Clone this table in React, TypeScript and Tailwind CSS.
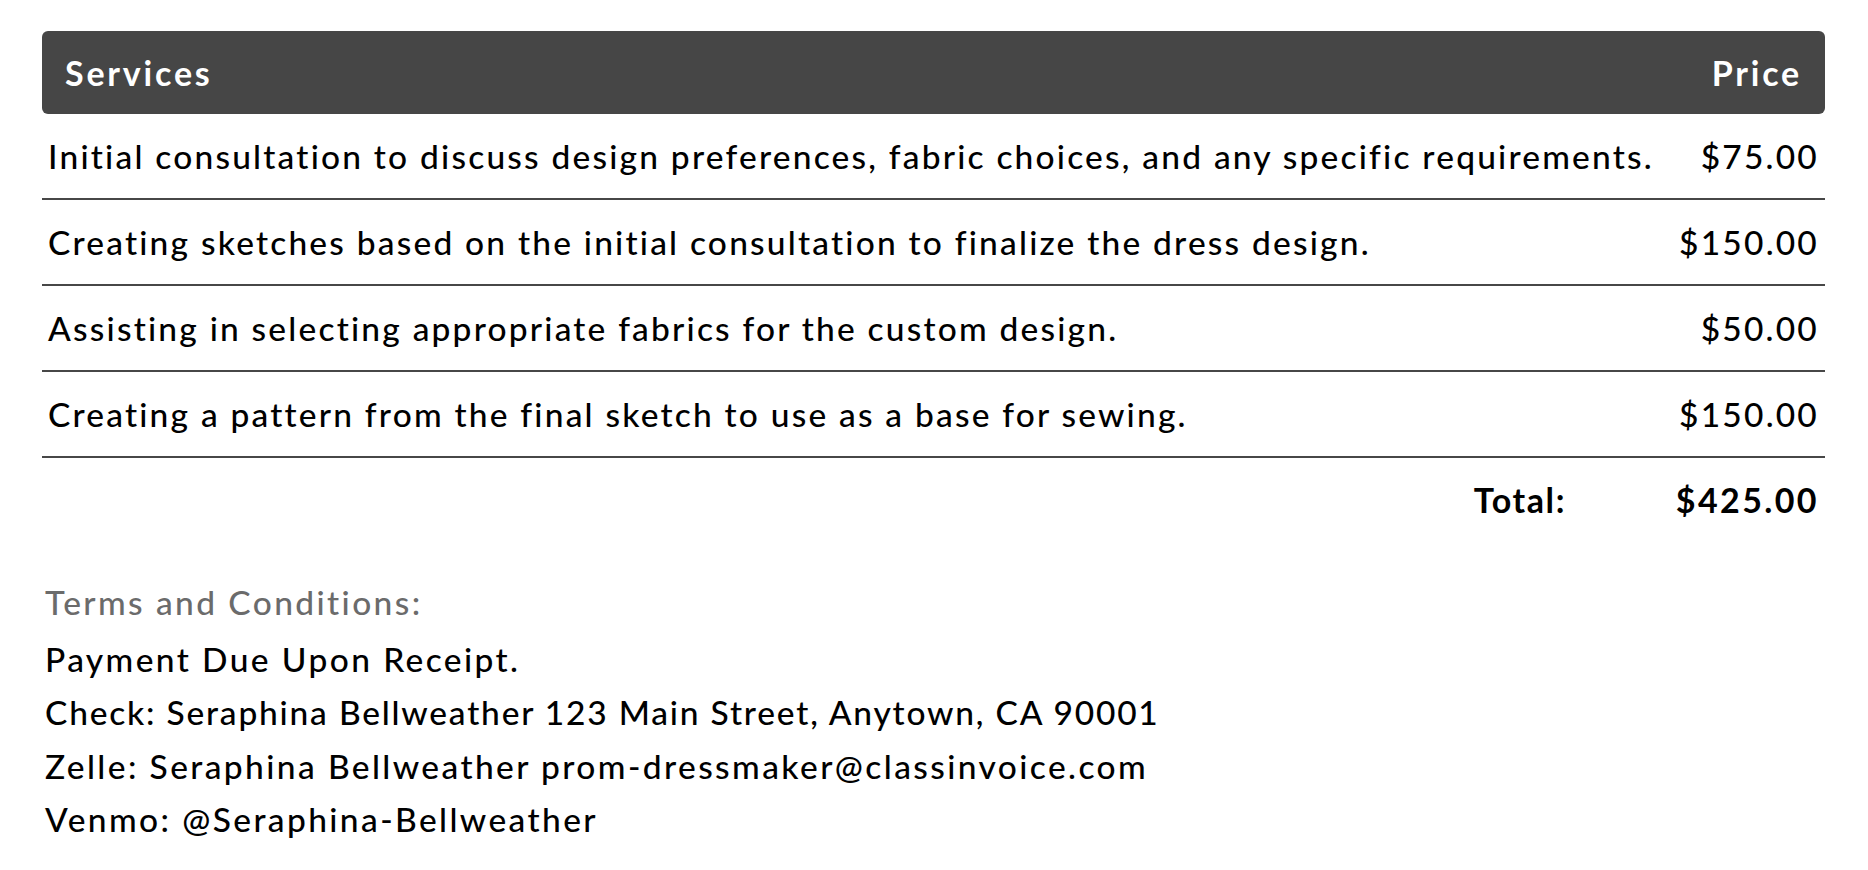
import React from "react";

const rows = [
  ["Initial consultation to discuss design preferences, fabric choices, and any specific requirements.", "$75.00"],
  ["Creating sketches based on the initial consultation to finalize the dress design.", "$150.00"],
  ["Assisting in selecting appropriate fabrics for the custom design.", "$50.00"],
  ["Creating a pattern from the final sketch to use as a base for sewing.", "$150.00"],
];

export default function App() {
  return (
    <div
      className="w-[1868px] h-[870px] bg-white text-black overflow-hidden"
      style={{ fontFamily: "Lato, 'Noto Sans', sans-serif" }}
    >
      <div className="pt-[31px] pl-[42px] pr-[43px]">
        <div className="flex items-center justify-between h-[83px] bg-[#464646] rounded-[6px] px-[23px] text-white font-bold text-[34px] tracking-[2.8px]">
          <span>Services</span>
          <span>Price</span>
        </div>
        {rows.map(([d, p]) => (
          <div
            key={d}
            className="flex items-center justify-between h-[86px] border-b-2 border-[#474747] px-[6px] text-[33.5px] font-medium tracking-[2.2px]"
          >
            <span>{d}</span>
            <span>{p}</span>
          </div>
        ))}
        <div className="flex items-center justify-end h-[82px] px-[6px] text-[34px] font-bold">
          <span className="tracking-[1.6px]">Total:</span>
          <span className="w-[253px] text-right tracking-[2.4px]">$425.00</span>
        </div>
        <div className="mt-[36px] pl-[3px] text-[33.5px] font-medium leading-[53.5px] tracking-[2.4px]">
          <div className="text-[#6b6b6b] mb-[3px]">Terms and Conditions:</div>
          <div>Payment Due Upon Receipt.</div>
          <div className="tracking-[1.8px]">Check: Seraphina Bellweather 123 Main Street, Anytown, CA 90001</div>
          <div>Zelle: Seraphina Bellweather prom-dressmaker@classinvoice.com</div>
          <div>Venmo: @Seraphina-Bellweather</div>
        </div>
      </div>
    </div>
  );
}
